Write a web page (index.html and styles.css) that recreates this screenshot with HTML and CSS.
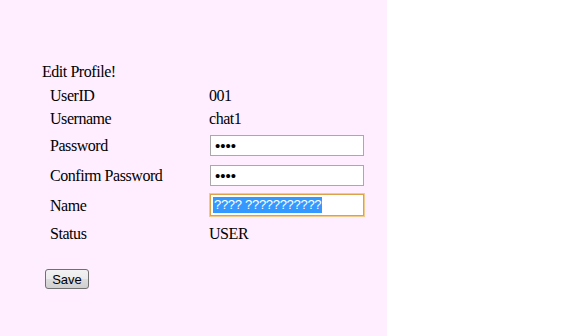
FILE: index.html
```html
<!DOCTYPE html>
<html>
<head>
<meta charset="utf-8">
<link rel="stylesheet" href="styles.css">
</head>
<body>
<div class="page">
  <div class="panel">
    <div class="title">Edit Profile!</div>
    <div class="form">
      <div class="row text"><span class="label">UserID</span><span class="value">001</span></div>
      <div class="row text"><span class="label">Username</span><span class="value">chat1</span></div>
      <div class="row field-row"><span class="label">Password</span><input class="field pw" type="password" value="1234"></div>
      <div class="row field-row"><span class="label">Confirm Password</span><input class="field pw" type="password" value="1234"></div>
      <div class="row field-row"><span class="label">Name</span><div class="field focused"><span class="sel">???? ???????????</span></div></div>
      <div class="row status"><span class="label">Status</span><span class="value">USER</span></div>
    </div>
    <button class="save" type="button">Save</button>
  </div>
</div>
</body>
</html>
```
FILE: styles.css
```css
html, body {
  margin: 0;
  padding: 0;
  background: #ffffff;
}
.page {
  display: flex;
  width: 583px;
  height: 336px;
}
.panel {
  width: 387px;
  height: 336px;
  box-sizing: border-box;
  background: #ffeeff;
  padding: 63px 0 0 42px;
  font-family: "Liberation Serif", "Times New Roman", serif;
  font-size: 16px;
  line-height: 18px;
  letter-spacing: -0.45px;
  color: #000;
}
.title {
  height: 18px;
  margin-bottom: 3px;
}
.form {
  display: flex;
  flex-direction: column;
  margin-left: 8px;
}
.row {
  display: grid;
  grid-template-columns: 159px 154px;
  align-items: center;
}
.row.text { height: 23px; }
.row.field-row { height: 30px; }
.row.field-row .label { padding-top: 2px; }
.row.status { height: 27px; }
.field {
  box-sizing: border-box;
  width: 154px;
  height: 21px;
  margin: 0 0 0 1px;
  padding: 1px 2px;
  border: 1px solid #a9a9a9;
  background: #fff;
  font-family: "Liberation Sans", Arial, sans-serif;
  font-size: 13px;
  letter-spacing: 0;
  outline: none;
}
.field.pw {
  font-size: 15px;
  padding: 0 2px 0 4px;
}
.field.focused {
  height: 22px;
  border: 1px solid #dba24a;
  box-shadow: 0 0 0 1px #f2cb8a;
  display: flex;
  align-items: center;
  padding: 0 1px 0 2px;
}
.sel {
  background: #3399ff;
  color: #fff;
  line-height: 16px;
  height: 16px;
  padding: 0 1px;
  letter-spacing: -0.3px;
}
.save {
  margin: 22px 0 0 3px;
  width: 44px;
  height: 20px;
  padding: 0;
  border: 1px solid #707070;
  border-radius: 3px;
  background: linear-gradient(#f2f2f2 0%, #ebebeb 50%, #dddddd 51%, #cfcfcf 100%);
  font-family: "Liberation Sans", Arial, sans-serif;
  font-size: 13px;
  letter-spacing: 0;
  color: #000;
}
```
